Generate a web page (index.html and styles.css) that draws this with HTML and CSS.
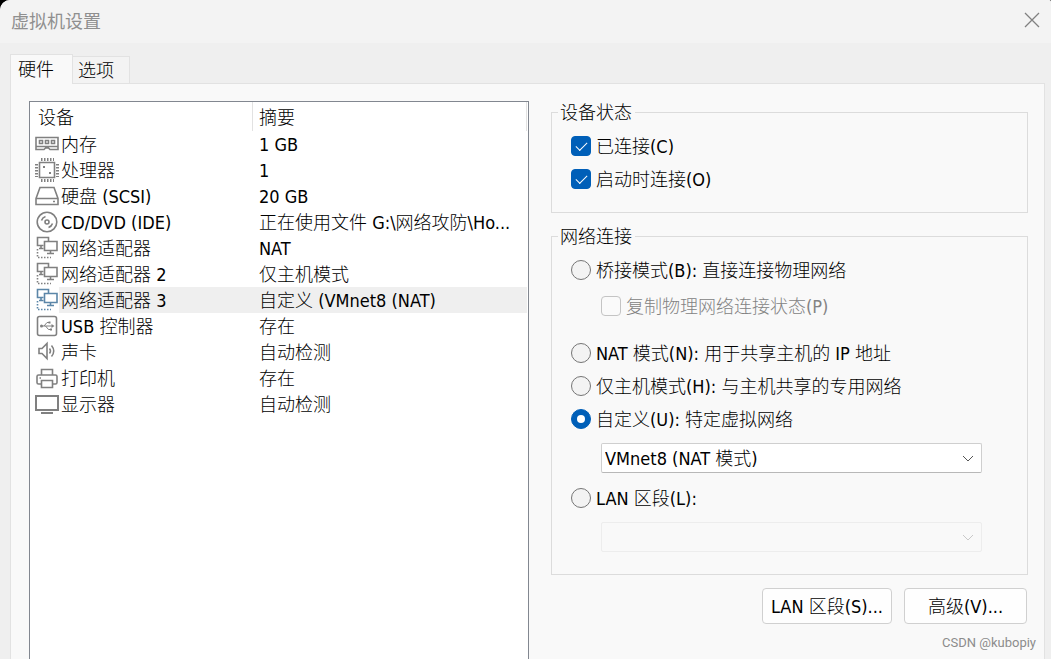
FILE: index.html
```html
<!DOCTYPE html>
<html lang="zh-CN">
<head>
    <meta charset="UTF-8">
    <meta name="viewport" content="width=device-width, initial-scale=1.0">
    <title>虚拟机设置</title>
    <link rel="stylesheet" href="styles.css">
</head>
<body>
    <!-- Shared shape for the network adapters -->
    <svg class="sprite" aria-hidden="true">
        <symbol id="adapter" viewBox="0 0 24 24">
            <path d="M8.500 9.500h-6v-8h11v4M6 9.500v3M4 12.500h4.500" />
            <path d="M9.500 5.500h12.500v9h-12.500zM15.500 14.500v3M12 17.500h7" />
            <path d="M2.500 13v8M3 21.500h13" stroke-dasharray="1.500 1.500" />
        </symbol>
    </svg>

    <div class="window">
        <header class="titlebar">
            <h1>虚拟机设置</h1>
            <button class="close" aria-label="关闭">
                <svg viewBox="0 0 16 16"><path d="M1 1l14 14M15 1L1 15" /></svg>
            </button>
        </header>

        <div class="tabs">
            <button class="tab active">硬件</button>
            <button class="tab">选项</button>
        </div>

        <main class="panel">
            <div class="devices">
                <table>
                    <colgroup>
                        <col class="col-icon">
                        <col class="col-name">
                        <col>
                    </colgroup>
                    <thead>
                        <tr><th class="device" colspan="2">设备</th><th class="summary">摘要</th></tr>
                    </thead>
                    <tbody>
                        <tr>
                            <td class="icon"><svg viewBox="0 0 24 24"><path d="M1 5.500h22v12h-8l-1.500-1.500h-3l-1.500 1.500h-8zM1 14.500h22" /><path d="M4.500 8.500h3v3h-3zM10.500 8.500h3v3h-3zM16.500 8.500h3v3h-3z" /></svg></td>
                            <td class="name">内存</td><td class="summary">1 GB</td>
                        </tr>
                        <tr>
                            <td class="icon"><svg viewBox="0 0 24 24"><path d="M4.500 4.500h15v15h-15z" /><path d="M6 1.500h13M6 22.500h13M1.500 6v13M22.500 6v13" stroke-width="3" stroke-dasharray="1.500 1.500" /><path d="M8 9h2M14 15h2" stroke-width="2" /></svg></td>
                            <td class="name">处理器</td><td class="summary">1</td>
                        </tr>
                        <tr>
                            <td class="icon"><svg viewBox="0 0 24 24"><path d="M1 14.500L5 3.500h14l4 11v6H1zM1 14.500h22M18 17.500h2" /></svg></td>
                            <td class="name">硬盘 (SCSI)</td><td class="summary">20 GB</td>
                        </tr>
                        <tr>
                            <td class="icon"><svg viewBox="0 0 24 24"><circle cx="12" cy="12" r="9.800" /><circle cx="12" cy="12" r="2" /><path d="M6.500 10.500a6 6 0 0 1 4-4M17.500 13.500a6 6 0 0 1-4 4" /></svg></td>
                            <td class="name">CD/DVD (IDE)</td><td class="summary">正在使用文件 G:\网络攻防\Ho...</td>
                        </tr>
                        <tr>
                            <td class="icon"><svg><use href="#adapter" /></svg></td>
                            <td class="name">网络适配器</td><td class="summary">NAT</td>
                        </tr>
                        <tr>
                            <td class="icon"><svg><use href="#adapter" /></svg></td>
                            <td class="name">网络适配器 2</td><td class="summary">仅主机模式</td>
                        </tr>
                        <tr class="selected">
                            <td class="icon"><svg><use href="#adapter" /></svg></td>
                            <td class="name">网络适配器 3</td><td class="summary">自定义 (VMnet8 (NAT)</td>
                        </tr>
                        <tr>
                            <td class="icon"><svg viewBox="0 0 24 24"><rect x="2.500" y="2.500" width="19" height="19" rx="2" /><path d="M7 12h10M9 12l3-3.500h2M10.500 12l3 3.500h2" stroke-width="1" /><circle class="dot" cx="6.500" cy="12" r="1.500" /><path class="dot" d="M16.500 10l3 2-3 2zM13.500 7.500h2v2h-2zM15 14.500h2v2h-2z" /></svg></td>
                            <td class="name">USB 控制器</td><td class="summary">存在</td>
                        </tr>
                        <tr>
                            <td class="icon"><svg viewBox="0 0 24 24"><path d="M4 8.500h3l5-5v15l-5-5H4z" /><path d="M14.500 8.500q2 2.500 0 5M16.500 5.500q4.500 5.500 0 11" stroke-width="1.500" /></svg></td>
                            <td class="name">声卡</td><td class="summary">自动检测</td>
                        </tr>
                        <tr>
                            <td class="icon"><svg viewBox="0 0 24 24"><path d="M6.500 9V3.500h11V9M6.500 18h-3a1.500 1.500 0 0 1-1.500-1.500v-6A1.500 1.500 0 0 1 3.500 9h17a1.500 1.500 0 0 1 1.500 1.500v6a1.500 1.500 0 0 1-1.500 1.500h-3" /><path d="M6.500 14.500h11v7h-11zM4.500 12h1.500" /></svg></td>
                            <td class="name">打印机</td><td class="summary">存在</td>
                        </tr>
                        <tr>
                            <td class="icon"><svg viewBox="0 0 24 24"><path d="M1 4h22v14H1z" stroke-width="2" /><path d="M6 21h12" stroke-width="2" /></svg></td>
                            <td class="name">显示器</td><td class="summary">自动检测</td>
                        </tr>
                    </tbody>
                </table>
            </div>

            <div class="settings">
                <fieldset>
                    <legend>设备状态</legend>
                    <label class="option"><input type="checkbox" checked>已连接(C)</label>
                    <label class="option"><input type="checkbox" checked>启动时连接(O)</label>
                </fieldset>

                <fieldset class="network">
                    <legend>网络连接</legend>
                    <label class="option"><input type="radio" name="net">桥接模式(B): 直接连接物理网络</label>
                    <label class="option nested"><input type="checkbox" disabled>复制物理网络连接状态(P)</label>
                    <label class="option"><input type="radio" name="net">NAT 模式(N): 用于共享主机的 IP 地址</label>
                    <label class="option"><input type="radio" name="net">仅主机模式(H): 与主机共享的专用网络</label>
                    <label class="option"><input type="radio" name="net" checked>自定义(U): 特定虚拟网络</label>
                    <select aria-label="虚拟网络">
                        <option>VMnet8 (NAT 模式)</option>
                    </select>
                    <label class="option"><input type="radio" name="net">LAN 区段(L):</label>
                    <select aria-label="LAN 区段" disabled></select>
                </fieldset>

                <div class="actions">
                    <button class="btn">LAN 区段(S)...</button>
                    <button class="btn">高级(V)...</button>
                </div>
                <div class="credit">CSDN @kubopiy</div>
            </div>
        </main>
    </div>
</body>
</html>
```
FILE: styles.css
```css
* {
    box-sizing: border-box;
    margin: 0;
    padding: 0;
}

body {
    background: #000;
    color: #000;
    font: 18px/24px "DejaVu Sans Condensed", "Noto Sans CJK SC", sans-serif;
}

button, select {
    font: inherit;
    color: inherit;
}

.sprite {
    position: absolute;
    width: 0;
    height: 0;
}

.window {
    display: flex;
    flex-direction: column;
    height: 100vh;
    overflow: hidden;
    background: #efefef;
    border-radius: 10px 2px 0 0;
}

.titlebar {
    display: flex;
    flex-shrink: 0;
    justify-content: space-between;
    align-items: center;
    height: 43px;
    padding: 0 11px 4px;
    background: #f3f3f3;
}

.titlebar h1 {
    color: #8f8f8f;
    font: 18px/24px "Noto Sans CJK SC", sans-serif;
}

.close {
    width: 16px;
    height: 16px;
    border: none;
    background: none;
}

.close svg {
    display: block;
    fill: none;
    stroke: #808080;
    stroke-width: 1.3;
}

/* Tabs overlap the panel's top border by 1px */
.tabs {
    display: flex;
    flex-shrink: 0;
    align-items: flex-end;
    height: 41px;
    margin: 0 10px -1px;
}

.tab {
    height: 28px;
    padding: 2px 15px 0 5px;
    border: 1px solid #e2e2e2;
    border-left: none;
    background: #f3f3f3;
    font-weight: 300;
}

.tab.active {
    z-index: 1;
    height: 30px;
    padding: 0 18px 0 7px;
    border-left: 1px solid #e2e2e2;
    border-bottom: none;
    background: #f9f9f9;
}

.panel {
    display: grid;
    flex: 1;
    grid-template-columns: 500fr 477fr;
    gap: 22px;
    min-height: 0;
    margin: 0 6px 0 10px;
    padding: 17px 16px 0 18px;
    border: 1px solid #e2e2e2;
    border-bottom: none;
    background: #f9f9f9;
}

.devices {
    padding-right: 1px;
    border: 1px solid #828790;
    border-bottom: none;
    background: #fff;
}

table {
    width: 100%;
    border-collapse: separate;
    border-spacing: 0;
    table-layout: fixed;
}

.col-icon {
    width: 29px;
}

.col-name {
    width: 193px;
}

th {
    height: 29px;
    padding-top: 2px;
    font-weight: 300;
    text-align: left;
}

th.device {
    padding-left: 8px;
}

th.summary {
    border-left: 1px solid #e2e2e2;
    border-right: 1px solid #e2e2e2;
    padding-left: 6px;
}

td {
    height: 26px;
    font-weight: 300;
    white-space: nowrap;
}

.name {
    padding: 2px 0 0 2px;
}

td.summary {
    padding: 2px 0 0 7px;
}

.selected .name,
.selected .summary {
    background: #efefef;
}

.icon {
    padding-left: 5px;
}

.icon svg {
    display: block;
    width: 24px;
    height: 24px;
    fill: none;
    stroke: #808080;
    stroke-width: 1.6;
}

.icon .dot {
    fill: #808080;
    stroke: none;
}

.selected .icon svg {
    stroke: #5b86a8;
}

.settings {
    display: flex;
    flex-direction: column;
    gap: 12px;
    font-weight: 300;
}

fieldset {
    min-width: 0;
    padding: 7px 45px 16px 19px;
    border: 1px solid #dcdcdc;
}

legend {
    margin-left: -13px;
    padding: 2px 3px 0 2px;
    line-height: 20px;
}

.network {
    padding-bottom: 22px;
}

.option {
    display: flex;
    align-items: center;
    gap: 5px;
    height: 33px;
    white-space: nowrap;
}

.nested {
    margin: 3px 0 14px 30px;
    color: #838383;
}

input {
    appearance: none;
    display: grid;
    place-content: center;
    flex-shrink: 0;
    width: 20px;
    height: 20px;
    margin-bottom: 1px;
    border: 1px solid #757575;
    background: #f3f3f3;
}

input[type="checkbox"] {
    border-radius: 4px;
}

input[type="radio"] {
    border-radius: 50%;
}

input:checked {
    border-color: #005fb8;
    background: #005fb8;
}

input[type="checkbox"]:checked::before {
    content: "";
    width: 10px;
    height: 5px;
    margin-bottom: 3px;
    border: solid #fff;
    border-width: 0 0 1px 1px;
    transform: rotate(-45deg);
}

input[type="radio"]:checked::before {
    content: "";
    width: 8px;
    height: 8px;
    border-radius: 50%;
    background: #fff;
}

input:disabled {
    border-color: #c4c4c4;
    background: #fafafa;
}

select {
    appearance: none;
    display: block;
    width: calc(100% - 30px);
    height: 30px;
    margin: 7px 0 9px 30px;
    padding: 2px 30px 0 3px;
    border: 1px solid #cfcfcf;
    border-bottom-color: #b8b8b8;
    border-radius: 2px;
    background: #fff url("data:image/svg+xml,%3Csvg xmlns='http://www.w3.org/2000/svg' width='12' height='7' fill='none' stroke='%23555'%3E%3Cpath d='M1 1l5 5 5-5'/%3E%3C/svg%3E") no-repeat right 7px center;
    font-weight: 300;
}

select:disabled {
    margin-bottom: 0;
    border-color: #e8e8e8;
    background-color: #fafafa;
    background-image: url("data:image/svg+xml,%3Csvg xmlns='http://www.w3.org/2000/svg' width='12' height='7' fill='none' stroke='%23b5b5b5'%3E%3Cpath d='M1 1l5 5 5-5'/%3E%3C/svg%3E");
}

.actions {
    display: flex;
    justify-content: flex-end;
    gap: 12px;
    padding: 1px 1px 0 0;
}

.btn {
    min-width: 123px;
    height: 36px;
    padding: 2px 8px 0;
    border: 1px solid #d0d0d0;
    border-radius: 4px;
    background: #fefefe;
    font-weight: 300;
    white-space: nowrap;
}

.credit {
    margin-right: -8px;
    color: #8c8c8c;
    font: 13px/14px Roboto, sans-serif;
    text-align: right;
}
```
